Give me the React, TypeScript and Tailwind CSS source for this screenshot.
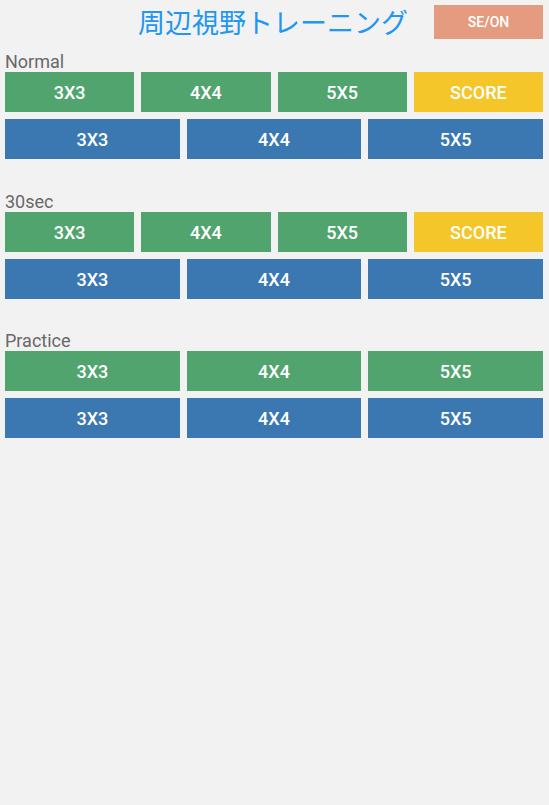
import React from 'react';

const sections = [
  { name: 'Normal', score: true, top: 'mt-0' },
  { name: '30sec', score: true, top: 'mt-[32px]' },
  { name: 'Practice', score: false, top: 'mt-[31px]' },
];

const sizes = ['3X3', '4X4', '5X5'];

const Tile = ({ label, color }: { label: string; color: string }) => (
  <button
    className={`h-10 flex items-center justify-center text-white text-[18px] font-medium ${color}`}
    style={{ fontFamily: 'Roboto, "Liberation Sans", sans-serif' }}
  >
    {label}
  </button>
);

const App = () => {
  return (
    <div
      className="min-h-[805px] w-full bg-[#f2f2f2]"
      style={{ fontFamily: 'Roboto, "Noto Sans", sans-serif' }}
    >
      {/* Header */}
      <div className="grid grid-cols-[1fr_auto_1fr] items-start h-[51px] pr-[6px]">
        <div />
        <h1
          className="mt-[8px] pl-[3px] text-[27px] leading-[27px] text-[#2196f3] whitespace-nowrap"
          style={{ fontFamily: '"Noto Sans CJK JP", "Noto Sans", sans-serif' }}
        >
          周辺視野トレーニング
        </h1>
        <div className="flex justify-end">
          <button className="mt-[5px] w-[109px] h-[34px] bg-[#e49b80] text-white text-[14px] font-medium flex items-center justify-center">
            SE/ON
          </button>
        </div>
      </div>

      {/* Sections */}
      <div className="pl-[5px] pr-[6px]">
        {sections.map((s) => (
          <div key={s.name} className={s.top}>
            <div className="h-[21px] text-[18px] leading-[21px] text-[#686868]">{s.name}</div>
            {s.score ? (
              <div className="grid grid-cols-4 gap-[7px]">
                {sizes.map((z) => (
                  <Tile key={z} label={z} color="bg-[#52a46f]" />
                ))}
                <Tile label="SCORE" color="bg-[#f5c62a]" />
              </div>
            ) : (
              <div className="grid grid-cols-3 gap-[7px]">
                {sizes.map((z) => (
                  <Tile key={z} label={z} color="bg-[#52a46f]" />
                ))}
              </div>
            )}
            <div className="grid grid-cols-3 gap-[7px] mt-[7px]">
              {sizes.map((z) => (
                <Tile key={z} label={z} color="bg-[#3b78b2]" />
              ))}
            </div>
          </div>
        ))}
      </div>
    </div>
  );
};

export default App;
